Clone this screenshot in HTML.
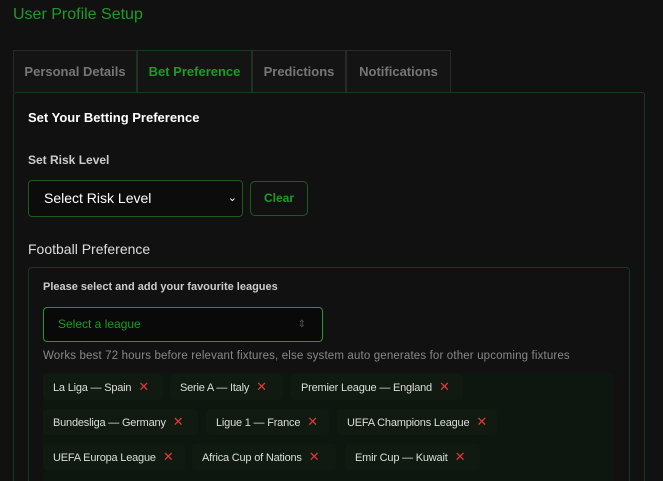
<!DOCTYPE html>
<html style="overflow:hidden;height:481px"><head><style>
body{margin:0;width:663px;height:481px;background:#111;overflow:hidden;font-family:"Liberation Sans",sans-serif;position:relative}
.a{position:absolute;white-space:nowrap}
.tab{position:absolute;top:50px;height:42px;border:1px solid #2a2a2a;border-bottom:none;box-sizing:border-box;color:#777;font-weight:bold;font-size:13px;line-height:42px;text-align:center;background:#141414}
.chip{position:absolute;height:26px;line-height:26px;background:#101a10;color:#ddd;font-size:11px;padding-left:10px;box-sizing:border-box;border-radius:4px;white-space:nowrap;overflow:hidden;letter-spacing:-0.2px}
.chip b{color:#e53935;font-weight:normal;font-size:13px;margin-left:7px}
</style></head><body>
<div class="a" style="left:13px;top:6px;color:#1f9a2a;font-size:16px">User Profile Setup</div>
<div class="tab" style="left:13px;width:124px">Personal Details</div>
<div class="tab" style="left:137px;width:115px;color:#1f9a2a;border-color:#173a1a">Bet Preference</div>
<div class="tab" style="left:252px;width:94px">Predictions</div>
<div class="tab" style="left:346px;width:105px">Notifications</div>
<div class="a" style="left:13px;top:92px;width:632px;height:400px;border:1px solid #173a1a;border-radius:3px;box-sizing:border-box"></div>
<div class="a" style="left:28px;top:110px;color:#fff;font-size:13px;font-weight:bold">Set Your Betting Preference</div>
<div class="a" style="left:28px;top:153px;color:#ccc;font-size:12px;font-weight:bold">Set Risk Level</div>
<div class="a" style="left:28px;top:180px;width:215px;height:37px;border:1px solid #1d5a22;border-radius:4px;box-sizing:border-box;background:#0c0c0c;color:#fff;font-size:14px;line-height:35px;padding-left:15px">Select Risk Level<span style="position:absolute;right:5px;top:0;font-size:11px">&#8964;</span></div>
<div class="a" style="left:250px;top:181px;width:58px;height:35px;border:1px solid #1d5a22;border-radius:5px;box-sizing:border-box;color:#1f9a2a;font-size:12px;font-weight:bold;line-height:33px;text-align:center">Clear</div>
<div class="a" style="left:28px;top:241px;color:#ddd;font-size:14px">Football Preference</div>
<div class="a" style="left:28px;top:267px;width:602px;height:230px;border:1px solid #173a1a;border-radius:4px;box-sizing:border-box"></div>
<div class="a" style="left:43px;top:281px;color:#ccc;font-size:11px;font-weight:bold">Please select and add your favourite leagues</div>
<div class="a" style="left:43px;top:307px;width:280px;height:35px;border:1px solid #1f9a2a;border-radius:4px;box-sizing:border-box;background:#090909;color:#1f9a2a;font-size:12px;line-height:33px;padding-left:14px">Select a league<span style="position:absolute;right:16px;top:0;color:#555;font-size:10px">&#8661;</span></div>
<div class="a" style="left:43px;top:350px;color:#888;font-size:11.5px;letter-spacing:0.15px">Works best 72 hours before relevant fixtures, else system auto generates for other upcoming fixtures</div>
<div class="a" style="left:43px;top:373px;width:571px;height:120px;background:#0e170f;border-radius:4px"></div>
<div class="chip" style="left:43px;top:374px;width:120px">La Liga — Spain<b>✕</b></div>
<div class="chip" style="left:170px;top:374px;width:113px">Serie A — Italy<b>✕</b></div>
<div class="chip" style="left:291px;top:374px;width:172px">Premier League — England<b>✕</b></div>
<div class="chip" style="left:43px;top:409px;width:155px">Bundesliga — Germany<b>✕</b></div>
<div class="chip" style="left:206px;top:409px;width:123px">Ligue 1 — France<b>✕</b></div>
<div class="chip" style="left:337px;top:409px;width:160px">UEFA Champions League<b>✕</b></div>
<div class="chip" style="left:43px;top:444px;width:142px">UEFA Europa League<b>✕</b></div>
<div class="chip" style="left:192px;top:444px;width:144px">Africa Cup of Nations<b>✕</b></div>
<div class="chip" style="left:345px;top:444px;width:135px">Emir Cup — Kuwait<b>✕</b></div>
</body></html>
